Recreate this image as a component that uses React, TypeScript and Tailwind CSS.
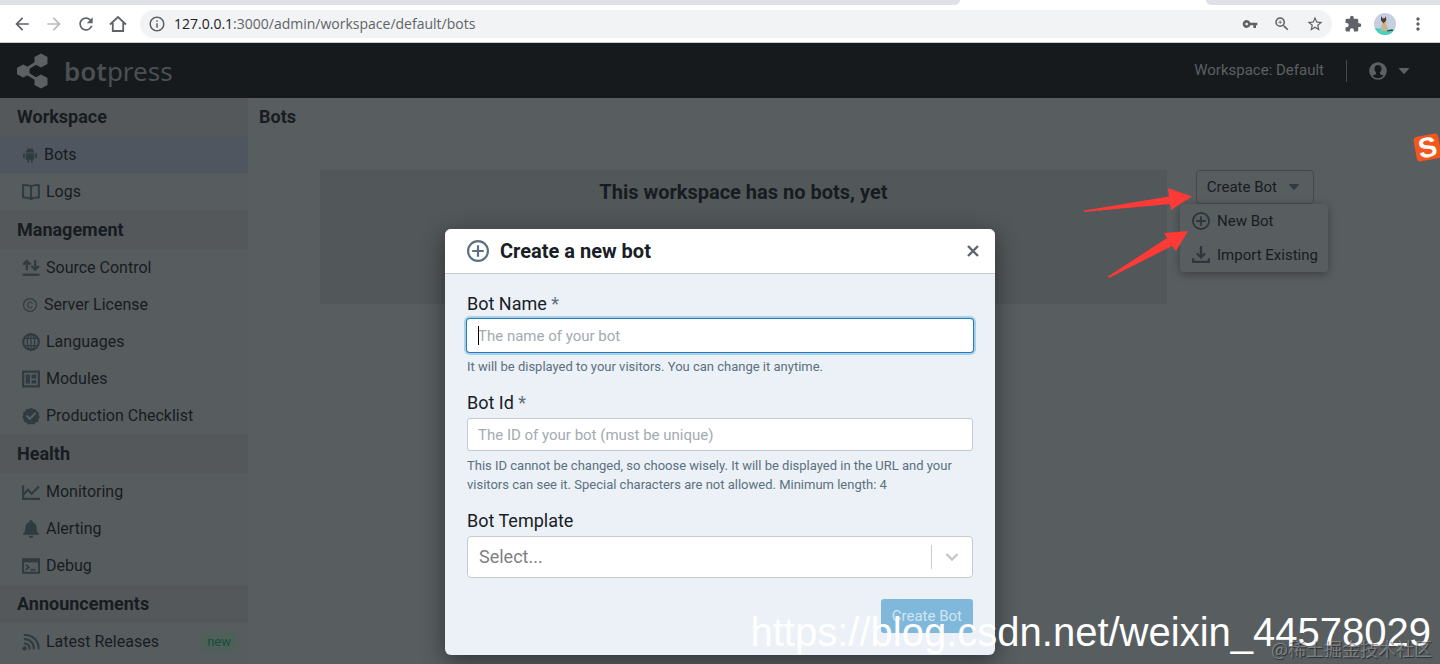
import React from "react";
import { AiOutlineCopyright } from "react-icons/ai";
import {
  MdArrowBack,
  MdArrowForward,
  MdExtension,
  MdInfoOutline,
  MdMoreVert,
  MdRefresh,
  MdStarBorder,
  MdVpnKey,
  MdZoomIn,
} from "react-icons/md";

type IconProps = { children: React.ReactNode; className?: string };

// 16px grid, two unit strokes
const Icon = ({ children, className }: IconProps) => (
  <svg
    viewBox="0 0 16 16"
    className={className}
    fill="none"
    stroke="currentColor"
    strokeWidth="2"
    aria-hidden="true"
  >
    {children}
  </svg>
);

const menuIcon = "h-[18px] w-[18px] shrink-0";

const AndroidIcon = () => (
  <svg viewBox="0 0 16 16" className="h-4 w-4 shrink-0" fill="currentColor" aria-hidden="true">
    <path d="M3.800 5.600C3.800 3.400 5.600 1.600 8 1.600s4.200 1.800 4.200 4z" />
    <path d="M3.800 6.200h8.400v5.600c0 .6-.4 1-1 1H4.800c-.6 0-1-.4-1-1z" />
    <path
      d="M2 7v3.400M14 7v3.400M6.200 12.500v2.300M9.800 12.500v2.300"
      stroke="currentColor"
      strokeWidth="1.800"
      strokeLinecap="round"
    />
    <path d="M5.300.8l1 1.700M10.700.8l-1 1.700" stroke="currentColor" strokeWidth=".7" />
  </svg>
);

const BookIcon = () => (
  <Icon className={menuIcon}>
    <path
      d="M8 3.2C6.500 1.700 4 1.600 1 1.700v11.200c3-.1 5.500.1 7 1.500 1.500-1.400 4-1.600 7-1.500V1.700c-3-.1-5.500 0-7 1.500zm0 0v11"
      strokeWidth="1.800"
      strokeLinejoin="round"
    />
  </Icon>
);

const SourceIcon = () => (
  <Icon className={menuIcon}>
    <path d="M4.300 10V2M1 5l3.300-3.300L7.600 5M11.700 1v8M8.400 6.200l3.300 3.300L15 6.200" strokeWidth="2" />
    <path d="M.5 14h15" />
  </Icon>
);

const GlobeIcon = () => (
  <Icon className={menuIcon}>
    <circle cx="8" cy="8" r="7" strokeWidth="1.900" />
    <ellipse cx="8" cy="8" rx="3.300" ry="7" strokeWidth="1.200" />
    <path d="M8 1v14M2 4.700h12M2 11.300h12" strokeWidth="1.100" />
  </Icon>
);

const ModulesIcon = () => (
  <Icon className={menuIcon}>
    <path d="M1 1.500h14v13H1z" />
    <path d="M3.300 4h3.700v8H3.300zM8.500 4h4.200v3.500H8.500zM8.500 9h4.200v3H8.500z" fill="currentColor" stroke="none" />
  </Icon>
);

const ChecklistIcon = () => (
  <svg viewBox="0 0 16 16" className={menuIcon} aria-hidden="true">
    <path
      d="M8 .6l1.900 1.200 2.200-.1 1 2 1.900 1.200-.2 2.200 1 1.900-1.300 1.800-.2 2.200-2.100.8-1.500 1.700L8 15.200l-2.700.3-1.500-1.700-2.100-.8-.2-2.200L.2 9l1-1.900L1 4.900l1.900-1.200 1-2 2.200.1z"
      fill="currentColor"
    />
    <path d="M4.500 8l2.400 2.400 4.700-4.700" fill="none" stroke="#585d60" strokeWidth="1.800" strokeLinecap="round" />
  </svg>
);

const ChartIcon = () => (
  <Icon className={menuIcon}>
    <path d="M1 2v12h15" />
    <path d="M1.500 10l3.800-4 3.200 3.500L15 3.200" strokeWidth="2" />
  </Icon>
);

const BellIcon = () => (
  <svg viewBox="0 0 16 16" className={menuIcon} fill="currentColor" aria-hidden="true">
    <path d="M8 0a1.500 1.500 0 0 1 1.500 1.500v.4C12 2.600 13 4.500 13 7c0 3 .8 4 2 4.800V13H1v-1.200C2.200 11 3 10 3 7c0-2.500 1-4.400 3.500-5.100v-.4A1.500 1.500 0 0 1 8 0zM6 14h4c0 1.200-.9 2-2 2s-2-.8-2-2z" />
  </svg>
);

const ConsoleIcon = () => (
  <Icon className={menuIcon}>
    <path d="M.9 2h14.200v12H.9z" strokeWidth="1.800" />
    <path d="M1 3.500h14" strokeWidth="2.500" />
    <path d="M3.500 6.800L6 9l-2.500 2.200" strokeWidth="1.600" />
    <path d="M7.500 11.300h4.500" strokeWidth="1.500" />
  </Icon>
);

const FeedIcon = () => (
  <Icon className={menuIcon}>
    <circle cx="2.300" cy="13.700" r="1.900" fill="currentColor" stroke="none" />
    <path d="M2.500 9.300a4.500 4.500 0 0 1 4.300 4.500M2.500 5.500a8 8 0 0 1 8.100 8.300M2.500 1.800c7 0 12.200 5 12.300 12" strokeWidth="1.900" strokeLinecap="round" />
  </Icon>
);

const AddIcon = ({ className }: { className: string }) => (
  <Icon className={className}>
    <circle cx="8" cy="8" r="7.200" strokeWidth="1.600" />
    <path d="M8 3.800v8.400M3.800 8h8.400" strokeWidth="1.600" />
  </Icon>
);

const ImportIcon = () => (
  <Icon className={menuIcon}>
    <path d="M8 0v10M4.300 6.500L8 10.200l3.700-3.700" strokeWidth="2" />
    <path d="M1 10.800v3.400h14v-3.400" strokeWidth="2" />
  </Icon>
);

const CaretIcon = () => (
  <svg viewBox="0 0 10 6" className="h-1.5 w-2.5" fill="currentColor" aria-hidden="true">
    <path d="M.6 0h8.800c.5 0 .7.500.4.900L5.500 5.700c-.3.300-.7.300-1 0L.2.900C-.1.500.1 0 .6 0z" />
  </svg>
);

const sections = [
  {
    title: "Workspace",
    items: [
      { label: "Bots", icon: <AndroidIcon />, active: true },
      { label: "Logs", icon: <BookIcon /> },
    ],
  },
  {
    title: "Management",
    items: [
      { label: "Source Control", icon: <SourceIcon /> },
      { label: "Server License", icon: <AiOutlineCopyright className="h-4 w-4" /> },
      { label: "Languages", icon: <GlobeIcon /> },
      { label: "Modules", icon: <ModulesIcon /> },
      { label: "Production Checklist", icon: <ChecklistIcon /> },
    ],
  },
  {
    title: "Health",
    items: [
      { label: "Monitoring", icon: <ChartIcon /> },
      { label: "Alerting", icon: <BellIcon /> },
      { label: "Debug", icon: <ConsoleIcon /> },
    ],
  },
  {
    title: "Announcements",
    items: [{ label: "Latest Releases", icon: <FeedIcon />, badge: "new" }],
  },
];

const BrowserBar = () => (
  <div className="bg-white">
    <div className="flex h-[5px] bg-white">
      <div className="w-2/3 rounded-br-lg bg-[#dee1e6]" />
      <div className="w-[246px]" />
      <div className="flex-1 rounded-bl-lg bg-[#dee1e6]" />
    </div>
    <div className="flex h-[38px] items-center border-b border-[#c9cccf] px-3 text-[#5f6368]">
      <div className="flex items-center gap-3">
        <button aria-label="Back"><MdArrowBack className="h-5 w-5" /></button>
        <button aria-label="Forward" className="text-[#b9bbbe]"><MdArrowForward className="h-5 w-5" /></button>
        <button aria-label="Reload"><MdRefresh className="h-5 w-5" /></button>
        <button aria-label="Home">
          <svg viewBox="0 0 20 20" className="h-5 w-5" fill="none" stroke="currentColor" strokeWidth="1.800">
            <path d="M2 10.500L10 3l8 7.500M4.800 9v8h10.400V9" />
          </svg>
        </button>
      </div>
      <div className="ml-3 flex h-7 flex-1 items-center rounded-full bg-[#f1f3f4] px-2">
        <MdInfoOutline className="h-[18px] w-[18px]" />
        <p className="ml-2 flex-1 font-['Open_Sans',sans-serif] text-sm text-[#5f6368]">
          <span className="text-[#202124]">127.0.0.1</span>:3000/admin/workspace/default/bots
        </p>
        <div className="flex items-center gap-[15px]">
          <MdVpnKey className="h-4 w-4" />
          <MdZoomIn className="h-[18px] w-[18px]" />
          <MdStarBorder className="h-[18px] w-[18px]" />
        </div>
      </div>
      <div className="ml-3 flex items-center gap-3">
        <MdExtension className="h-[18px] w-[18px]" />
        <svg viewBox="0 0 22 22" className="h-[22px] w-[22px]" aria-label="Profile">
          <defs>
            <clipPath id="avatar"><circle cx="11" cy="11" r="11" /></clipPath>
          </defs>
          <g clipPath="url(#avatar)">
            <path d="M0 0h22v22H0z" fill="#c6cfe2" />
            <path d="M0 15.500c6-1.500 15 2.500 22 .5v6H0z" fill="#48d1bd" />
            <path d="M8.500 8c2-1.500 4 1 4.300 4 .2 2.500 2 4 1.200 6H7.500c-1-3 .5-7 1-10z" fill="#c9b48f" />
            <path d="M7 3l1.800 2.500L11 5l1-2 .3 4.500-2.800 2.700L7 7.500z" fill="#4a3b35" />
            <path d="M13 17.500l5.500-1.200.5 1.500-6 .8z" fill="#3b4145" />
          </g>
        </svg>
        <button aria-label="Menu"><MdMoreVert className="h-5 w-5" /></button>
      </div>
    </div>
  </div>
);

const Header = () => (
  <header className="flex h-[55px] items-center bg-[#161a1d] pr-[31px] pl-4 text-[#5c6063]">
    <svg viewBox="0 0 32 36" className="h-9 w-8" fill="currentColor" aria-hidden="true">
      <path d="M25 7L7 18l18 11" fill="none" stroke="currentColor" strokeWidth="2.800" />
      <path d="M25 .5l6.500 3.500v7L25 14.500 18.500 11V4zM7.200 11.500l6.300 3.300v6.500l-6.300 3.300-6.200-3.300v-6.500zM25 21.500l6.500 3.500v7L25 35.500 18.500 32v-7z" />
    </svg>
    <p className="ml-4 font-['Noto_Sans',sans-serif] text-[26px] leading-8 text-[#4b4f52]">
      <span className="font-semibold">bot</span>press
    </p>
    <p className="ml-auto text-[15px]">Workspace: Default</p>
    <div className="ml-[22px] h-[22px] w-px bg-[#45494c]" />
    <button className="ml-[22px] flex items-center gap-3" aria-label="Account">
      <svg viewBox="0 0 18 18" className="h-[18px] w-[18px]" aria-hidden="true">
        <circle cx="9" cy="9" r="8" fill="none" stroke="currentColor" strokeWidth="1.500" />
        <path
          d="M9 .8a8.200 8.200 0 0 0-6.300 13.500C4 13.200 7 12.800 7 11.500V10.300C6 9.500 5.500 8.300 5.500 6.600 5.500 4.500 6.900 3 9 3s3.500 1.500 3.500 3.600c0 1.700-.5 2.900-1.500 3.700v1.200c0 1.300 3 1.700 4.300 2.800A8.200 8.200 0 0 0 9 .8z"
          fill="currentColor"
        />
      </svg>
      <CaretIcon />
    </button>
  </header>
);

const Sidebar = () => (
  <nav className="w-[248px] shrink-0 bg-[#575c5f] text-[#171c20]">
    {sections.map((section) => (
      <div key={section.title} className="mb-px">
        <h2 className="h-[38px] bg-[#54585b] pl-[17px] text-lg leading-[38px] font-bold">
          {section.title}
        </h2>
        {section.items.map((item) => (
          <a
            key={item.label}
            href="#"
            className={
              "active" in item
                ? "flex h-[37px] items-center gap-1.5 bg-[#50565f] pr-[11px] pl-[22px] text-base"
                : "flex h-[37px] items-center gap-1.5 pr-[11px] pl-[22px] text-base"
            }
          >
            <span className="text-[#303b40]">{item.icon}</span>
            {item.label}
            {"badge" in item && (
              <span className="ml-auto rounded-sm bg-[#4f5f59] px-1.5 text-[13px] leading-[22px] text-[#10503a]">
                {item.badge}
              </span>
            )}
          </a>
        ))}
      </div>
    ))}
  </nav>
);

const Content = () => (
  <main className="flex-1 text-[#171c20]">
    <h1 className="pl-[11px] text-lg leading-[38px] font-bold">Bots</h1>
    <div className="flex items-start gap-[29px] pt-[34px] pr-[126px] pl-[72px]">
      <div className="h-[134px] flex-1 bg-[#525759] pt-2 text-center text-xl leading-7 font-bold">
        This workspace has no bots, yet
      </div>
      <div className="relative">
        <button className="flex h-[34px] items-center gap-3 rounded-sm border border-[#46494c] pr-3.5 pl-2.5 text-[15px]">
          Create Bot
          <span className="text-[#303b40]"><CaretIcon /></span>
        </button>
        <div className="absolute top-[34px] -right-3.5 w-[148px] rounded-sm bg-[#585d60] text-[15px] shadow-[0_2px_8px_rgba(0,0,0,0.35)]">
          <button className="flex h-[34px] w-full items-center gap-[7px] pl-3 whitespace-nowrap">
            <span className="text-[#2c363b]"><AddIcon className="h-[18px] w-[18px]" /></span>
            New Bot
          </button>
          <button className="flex h-[34px] w-full items-center gap-[7px] pl-3 whitespace-nowrap">
            <span className="text-[#2c363b]"><ImportIcon /></span>
            Import Existing
          </button>
        </div>
      </div>
    </div>
  </main>
);

const CreateBotDialog = () => (
  <div
    role="dialog"
    aria-labelledby="dialog-title"
    className="w-[550px] overflow-hidden rounded-md bg-[#ebf1f6] text-[#182026] shadow-[0_6px_24px_rgba(0,0,0,0.45)]"
  >
    <div className="flex h-[45px] items-center border-b border-[#c6cdd2] bg-white pr-[15px] pl-[22px]">
      <span className="text-[#5c7080]"><AddIcon className="h-[22px] w-[22px]" /></span>
      <h2 id="dialog-title" className="ml-[11px] flex-1 text-xl font-bold">Create a new bot</h2>
      <button aria-label="Close" className="text-[#5c666d]">
        <svg viewBox="0 0 14 14" className="h-3.5 w-3.5" fill="none" stroke="currentColor" strokeWidth="2.400">
          <path d="M2 2l10 10M12 2L2 12" />
        </svg>
      </button>
    </div>
    <form className="px-[22px] pt-[18px] pb-[22px]">
      <label htmlFor="bot-name" className="mb-[3px] block text-lg leading-6">
        Bot Name <span className="text-[#5c7080]">*</span>
      </label>
      <div className="relative">
        <input
          id="bot-name"
          placeholder="The name of your bot"
          className="block h-[33px] w-full rounded-[3px] bg-white px-[11px] text-[15px] shadow-[0_0_0_1px_#1f7fb5,0_0_0_3px_#a9d0e8] outline-none placeholder:text-[#a3abb1]"
        />
        <span className="absolute top-[7px] left-[11px] h-[19px] w-px bg-black" />
      </div>
      <p className="mt-[5px] mb-[15px] text-[13px] leading-[19px] text-[#5c7080]">
        It will be displayed to your visitors. You can change it anytime.
      </p>
      <label htmlFor="bot-id" className="mb-[3px] block text-lg leading-6">
        Bot Id <span className="text-[#5c7080]">*</span>
      </label>
      <input
        id="bot-id"
        placeholder="The ID of your bot (must be unique)"
        className="block h-[33px] w-full rounded-[3px] border border-[#c3cad0] bg-white px-2.5 text-[15px] placeholder:text-[#a3abb1]"
      />
      <p className="mt-[5px] mb-[15px] text-[13px] leading-[19px] text-[#5c7080]">
        This ID cannot be changed, so choose wisely. It will be displayed in the URL and your
        visitors can see it. Special characters are not allowed. Minimum length: 4
      </p>
      <label htmlFor="bot-template" className="mb-[3px] block text-lg leading-6">
        Bot Template
      </label>
      <div className="relative">
        <select
          id="bot-template"
          className="block h-[42px] w-full appearance-none rounded border border-[#c8cbce] bg-white px-[11px] text-lg text-[#808080]"
        >
          <option>Select...</option>
        </select>
        <div className="pointer-events-none absolute inset-y-0 right-0 my-[9px] flex w-[42px] items-center justify-center border-l border-[#ccc] pr-0.5 text-[#c4c6c8]">
          <svg viewBox="0 0 14 10" className="h-2.5 w-3.5" fill="none" stroke="currentColor" strokeWidth="2.400">
            <path d="M1.500 2L7 7.500 12.500 2" />
          </svg>
        </div>
      </div>
      <div className="mt-[21px] flex justify-end">
        <button type="button" className="h-[34px] rounded-[3px] bg-[#7fb8da] px-[11px] text-[15px] text-[#cfe5f2]">
          Create Bot
        </button>
      </div>
    </form>
  </div>
);

export default function App() {
  return (
    <div className="relative flex h-screen flex-col overflow-hidden bg-[#585d60] font-['Roboto',sans-serif]">
      <BrowserBar />
      <Header />
      <div className="flex flex-1">
        <Sidebar />
        <Content />
      </div>

      {/* arrows pointing at the create menu */}
      <svg viewBox="0 0 112 96" className="absolute top-[186px] right-[246px] h-24 w-28" fill="#fd3a36" aria-hidden="true">
        <path d="M2 24.500L87 10.500 86 2l24 8.500L89 24l-1-6L2 26zM26 90.500L85 52l-3-5 24-2-12 20-4-5-63 32z" />
      </svg>

      <div className="absolute top-[135px] right-0 flex h-[25px] w-[25px] rotate-[-10deg] items-center justify-center rounded-sm bg-[#f4571b] font-['Liberation_Sans',sans-serif] text-[28px] leading-none font-bold text-white">
        S
      </div>

      <div className="absolute inset-x-0 top-[229px] flex justify-center">
        <CreateBotDialog />
      </div>

      <p className="pointer-events-none absolute right-[9px] bottom-2 font-['Liberation_Sans',sans-serif] text-[40px] leading-[48px] whitespace-nowrap text-white">
        https://blog.csdn.net/weixin_44578029
      </p>
      <p className="pointer-events-none absolute right-2 bottom-1 font-['Noto_Sans_CJK_SC',sans-serif] text-lg leading-6 whitespace-nowrap text-white/30 [text-shadow:1px_1px_1px_rgba(0,0,0,0.5)]">
        @稀土掘金技术社区
      </p>
    </div>
  );
}
